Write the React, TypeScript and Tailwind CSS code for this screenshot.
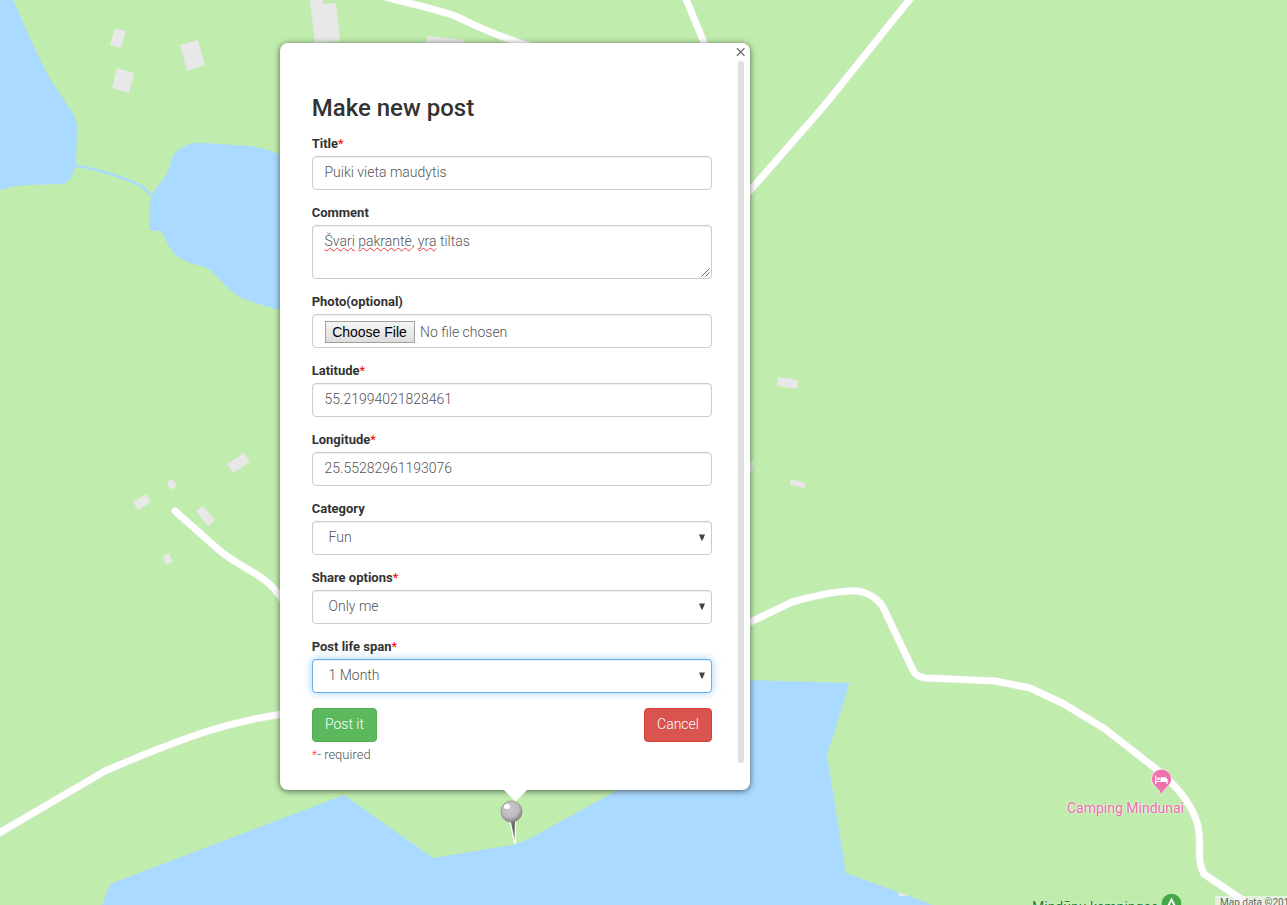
import React from "react";

const WATER = "#aadaff";
const BUILDING = "#e8e8e8";

const roads = [
  "M381 -4 C403 2 440 10 455 16 C475 25 495 36 530 46",
  "M684 -6 L707 50",
  "M914 -6 L824 106 L740 202",
  "M175 511 L211 543 Q224 555 236 562 L262 578 Q275 587 284 602",
  "M740 627 L792 602 C810 597 830 592 849 591 C866 590 876 597 883 607 L913 670 Q916 677 926 678 L995 681 L1030 688 L1064 704 L1105 729 L1160 772 Q1192 800 1198 826 C1202 845 1196 860 1204 874 L1250 905",
  "M-6 836 L105 771 Q160 747 205 732 Q245 719 290 713",
];

const buildings = [
  "115,28 126,31 121,48 110,45",
  "117,68 134,73 129,93 112,88",
  "180,45 198,40 205,65 187,71",
  "310,0 323,0 323,4 336,3 340,41 315,43",
  "427,36 464,40 464,50 426,50",
  "227,464 244,453 250,462 233,473",
  "167,482 173,479 177,486 170,490",
  "133,502 146,494 151,502 138,510",
  "196,511 203,506 215,520 208,526",
  "163,556 169,553 173,562 166,565",
  "778,377 798,380 797,389 777,386",
  "791,479 805,483 805,488 790,485",
  "748,462 754,462 751,472 748,472",
];

function MapCanvas() {
  return (
    <svg className="absolute inset-0" width="1287" height="905" viewBox="0 0 1287 905">
      <rect width="1287" height="905" fill="#c0ecae" />
      <g fill={WATER}>
        <path d="M0 0 H13 C25 27 39 58 49 77 L72 112 Q78 121 77 132 L76 165 C73 174 71 182 63 184 L25 185 Q12 186 0 190 Z" />
        <path d="M290 156 L279 154 Q260 146 242 145.500 L205 143 C190 142 183 146 174 154 C169 164 168 174 163 180 C155 189 151 195 150 202 L149 229 L152 231 L161 231 C166 239 168 247 176 255 Q185 263 202 266 C218 272 222 288 244 299 Q260 305 290 313 Z" />
        <path d="M102 905 L110 884 L344 795 L433 858 L512 845 L525 841 L627 785 L745 680 L849.500 683 L827 755 L846 873 L933 905 Z" />
      </g>
      <path d="M76 165.500 Q105 171 125 179 Q142 184 152 196" fill="none" stroke={WATER} strokeWidth="2.400" />
      <g fill={BUILDING}>
        {buildings.map((points) => (
          <polygon key={points} points={points} />
        ))}
      </g>
      <path d="M898 892 L908 896 L899 896Z" fill={BUILDING} />
      <g fill="none" strokeLinecap="round" strokeLinejoin="round">
        {roads.map((d) => (
          <path key={d} d={d} stroke="#e9ede4" strokeWidth="7.6" />
        ))}
        {roads.map((d) => (
          <path key={d} d={d} stroke="#fff" strokeWidth="6.4" />
        ))}
      </g>
      <g>
        <path d="M1161.500 796 C1160 788 1151.500 786 1151.500 779 A10 9.800 0 0 1 1171.500 779 C1171.500 786 1163 788 1161.500 796Z" fill="#ee72ae" stroke="#fff" strokeOpacity=".6" strokeWidth="1" />
        <path d="M1155.700 775.500 V784 M1156 781.500 H1167.300 M1167 784 V779" stroke="#fff" strokeWidth="1.200" fill="none" />
        <path d="M1160.500 777.200 H1165 Q1167.500 777.200 1167.500 781 H1160.500Z" fill="#fff" />
        <circle cx="1158.500" cy="778.800" r="1.400" fill="#fff" />
        <circle cx="1171.500" cy="903.500" r="9.800" fill="#45a848" />
        <path d="M1171.500 897.500 L1177 908 H1166Z" fill="#fff" />
        <path d="M1171.500 901.500 L1174 907 H1169Z" fill="#45a848" />
      </g>
    </svg>
  );
}

function PushPin() {
  return (
    <svg className="absolute left-[498px] top-[798px]" width="28" height="48" viewBox="0 0 28 48">
      <defs>
        <radialGradient id="ball" cx="42%" cy="36%" r="65%">
          <stop offset="0" stopColor="#cac8cb" />
          <stop offset=".65" stopColor="#bdbbbe" />
          <stop offset=".8" stopColor="#a19fa2" />
          <stop offset="1" stopColor="#858386" />
        </radialGradient>
      </defs>
      <path d="M11 22 L18 22 L18 45.500 L16 45.500Z" fill="#fff" />
      <path d="M12.500 22 H17 L16.600 42Z" fill="#6b6e69" />
      <circle cx="13.500" cy="13.500" r="10.600" fill="url(#ball)" stroke="#858386" strokeWidth=".6" />
      <ellipse cx="9" cy="8.500" rx="3" ry="2.600" fill="#fff" />
    </svg>
  );
}

const control =
  "w-full rounded-[4px] border border-[#ccc] bg-white pl-[11.5px] pr-3 text-[14px] font-light text-[#555] shadow-[inset_0_1px_1px_rgba(0,0,0,0.075)]";

function Field({ label, required, children }: { label: string; required?: boolean; children: React.ReactNode }) {
  return (
    <div className="mb-[15px]">
      <div className="-ml-[0.3px] mb-1 h-4 text-[13px] font-bold leading-4 text-[#333]">
        {label}
        {required && <span className="font-normal text-[#f00]">*</span>}
      </div>
      {children}
    </div>
  );
}

function TextBox({ value }: { value: string }) {
  return <div className={`${control} h-[34px] pt-[5px] leading-5`}>{value}</div>;
}

function SelectBox({ value, focused }: { value: string; focused?: boolean }) {
  return (
    <div
      className={
        focused
          ? "flex h-[34px] w-full justify-between rounded-[4px] border border-[#66afe9] bg-white pl-[15.5px] pr-1.5 pt-[5px] text-[14px] font-light leading-5 text-[#555] shadow-[inset_0_1px_1px_rgba(0,0,0,0.075),0_0_8px_rgba(102,175,233,0.6)]"
          : "flex h-[34px] w-full justify-between rounded-[4px] border border-[#ccc] bg-white pl-[15.5px] pr-1.5 pt-[5px] text-[14px] font-light leading-5 text-[#555] shadow-[inset_0_1px_1px_rgba(0,0,0,0.075)]"
      }
    >
      <span>{value}</span>
      <svg className="mt-[7px]" width="6" height="7" viewBox="0 0 6 7">
        <path d="M0 0.500H6L3.500 6.500H2.500Z" fill="#444" />
      </svg>
    </div>
  );
}

function Misspelled({ children }: { children: string }) {
  return (
    <span className="underline decoration-[#e33] decoration-wavy decoration-[1px] underline-offset-[1px] [text-decoration-skip-ink:none]">
      {children}
    </span>
  );
}

function PostWindow() {
  return (
    <div className="absolute left-[280px] top-[43px] flex h-[747px] w-[470px] rounded-[8px] bg-white shadow-[0_1px_6px_rgba(0,0,0,0.6)]">
      <div className="w-[458px] pl-8 pr-[26px] pt-[52px]">
        <h1 className="-ml-[0.3px] mb-[14px] h-[26px] text-[24px] font-medium leading-[26px] text-[#333]">Make new post</h1>
        <div className="pt-px">
          <Field label="Title" required>
            <TextBox value="Puiki vieta maudytis" />
          </Field>
          <Field label="Comment">
            <div className={`${control} relative h-[54px] pt-[5px] leading-5`}>
              <Misspelled>Švari</Misspelled> <Misspelled>pakrantė</Misspelled>, <Misspelled>yra</Misspelled> tiltas
              <svg className="absolute bottom-px right-px" width="9" height="9" viewBox="0 0 9 9">
                <path d="M0.500 8.500L8.500 0.500M4.500 8.500L8.500 4.500" stroke="#666" fill="none" />
              </svg>
            </div>
          </Field>
          <Field label="Photo(optional)">
            <div className={`${control} flex h-[34px] items-start pt-[6px]`}>
              <button className="h-[22px] w-[90px] border border-[#a0a0a0] bg-linear-to-b from-[#f5f5f5] to-[#dedede] font-['Liberation_Sans',sans-serif] text-[14px] font-normal leading-5 text-black">
                Choose File
              </button>
              <span className="ml-[5.5px] leading-[22px]">No file chosen</span>
            </div>
          </Field>
          <Field label="Latitude" required>
            <TextBox value="55.21994021828461" />
          </Field>
          <Field label="Longitude" required>
            <TextBox value="25.55282961193076" />
          </Field>
          <Field label="Category">
            <SelectBox value="Fun" />
          </Field>
          <Field label="Share options" required>
            <SelectBox value="Only me" />
          </Field>
          <Field label="Post life span" required>
            <SelectBox value="1 Month" focused />
          </Field>
          <div className="flex justify-between text-[14px] leading-5 text-white">
            <button className="h-[34px] w-[65px] rounded-[4px] border border-[#4cae4c] bg-[#5cb85c] pb-0.5 font-light">Post it</button>
            <button className="h-[34px] w-[68px] rounded-[4px] border border-[#d43f3a] bg-[#d9534f] pb-0.5 font-light">Cancel</button>
          </div>
          <p className="-ml-[0.3px] mt-1 text-[13px] font-light leading-[18px] text-[#555]">
            <span className="text-[#f44]">*</span>- required
          </p>
        </div>
      </div>
      <div className="flex flex-col pt-[5px]">
        <svg className="-ml-[2px]" width="9" height="9" viewBox="0 0 9 9">
          <path d="M0.900 0.200L8.500 7.800M8.500 0.200L0.900 7.800" stroke="#555" strokeWidth="1.100" />
        </svg>
        <div className="mt-1 h-[702px] w-1.5 rounded-[3px] bg-[#e0e0e0]" />
      </div>
      <svg className="absolute left-[224px] top-[747px]" width="23" height="12" viewBox="0 0 23 12">
        <path d="M0 0H23L11.500 11.500Z" fill="#fff" />
      </svg>
    </div>
  );
}

export default function App() {
  return (
    <main className="relative h-[905px] w-[1287px] overflow-hidden bg-[#c0ecae] font-['Roboto',sans-serif]">
      <MapCanvas />
      <span className="absolute left-[1067px] top-[799px] whitespace-nowrap text-[14px] leading-[18px] text-[#ea6ba6] [text-shadow:0_0_2px_#fff,0_0_1px_#fff]">
        Camping Mindunai
      </span>
      <span className="absolute left-[1032px] top-[898px] whitespace-nowrap text-[14px] leading-[18px] text-[#267d32] [text-shadow:0_0_2px_#fff]">
        Mindūnų kempingas
      </span>
      <div className="absolute left-[1215px] top-[896px] h-[14px] w-[90px] whitespace-nowrap bg-[#f5f5f5]/70 pl-[5px] text-[10px] leading-[14px] text-[#666]">
        Map data ©2018
      </div>
      <PushPin />
      <PostWindow />
    </main>
  );
}
